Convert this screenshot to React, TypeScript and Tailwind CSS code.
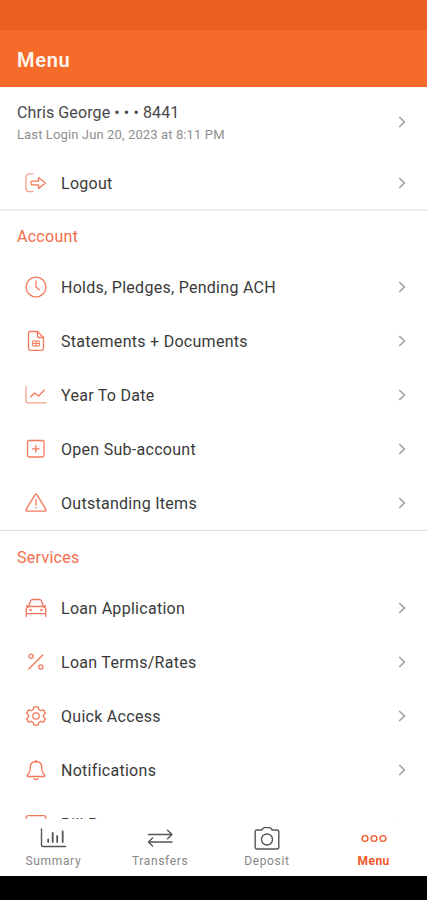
import type { ReactNode } from "react";

type Item = { label: string; icon: ReactNode };

function Icon({ children }: { children: ReactNode }) {
  return (
    <svg
      viewBox="0 0 22 22"
      className="h-[22px] w-[22px] shrink-0"
      fill="none"
      stroke="#f4795a"
      strokeWidth="1.3"
      strokeLinecap="round"
      strokeLinejoin="round"
    >
      {children}
    </svg>
  );
}

function Chevron() {
  return (
    <svg viewBox="0 0 8 12" className="h-3 w-2 shrink-0" fill="none" stroke="#a3a3a3" strokeWidth="1.7">
      <path d="M1.2 1 6.4 6 1.2 11" />
    </svg>
  );
}

const logoutIcon = (
  <Icon>
    <path d="M8 1.8H4.2Q1 1.8 1 5v11.5q0 3.200 3.200 3.200H8" strokeOpacity="0.7" />
    <path d="M7 9.200h6.500V5.600l7 5.400-7 5.400v-3.600H7q-1 0-1-1v-1.600q0-1 1-1Z" />
  </Icon>
);

const account: Item[] = [
  {
    label: "Holds, Pledges, Pending ACH",
    icon: (
      <Icon>
        <circle cx="11" cy="11" r="9.900" />
        <path d="M11 4.800V11l3.200 2.800" />
      </Icon>
    ),
  },
  {
    label: "Statements + Documents",
    icon: (
      <Icon>
        <path d="M12.500 1.500H5Q3.500 1.500 3.500 3v15.800q0 1.500 1.500 1.500h12q1.500 0 1.500-1.500V7.500Z" />
        <path d="M12.500 1.500v4.700q0 1.300 1.300 1.300h4.700" />
        <path d="M8 11h6.200v5H8ZM8 13.500h6.200M11 11v5" strokeWidth="1" />
      </Icon>
    ),
  },
  {
    label: "Year To Date",
    icon: (
      <Icon>
        <path d="M1 2.500v14.300q0 2 2 2h18" strokeOpacity="0.7" />
        <path d="m5.500 13 4-4 4 3 5.800-6" />
      </Icon>
    ),
  },
  {
    label: "Open Sub-account",
    icon: (
      <Icon>
        <rect x="2.500" y="2.500" width="16.500" height="16.500" rx="1.500" />
        <path d="M10.800 7.500v6.600M7.500 10.800h6.600" />
      </Icon>
    ),
  },
  {
    label: "Outstanding Items",
    icon: (
      <Icon>
        <path d="M9.800 3.100q1.200-2 2.400 0l8.400 13.800q1.100 2.300-1.400 2.300H2.800q-2.500 0-1.400-2.300Z" />
        <path d="M11 7.500v5.500M11 15.600v.3" />
      </Icon>
    ),
  },
];

const services: Item[] = [
  {
    label: "Loan Application",
    icon: (
      <Icon>
        <path d="M3.500 9.500 5.600 4q.6-1.500 2-1.500h6.800q1.400 0 2 1.500l2.100 5.500" />
        <path d="M3.500 9.500h15l2.200 2v5.200H1.300v-5.200ZM1.300 9h2.200M18.500 9h2.200M1.300 16.700v2.800M20.700 16.700v2.800M4.500 13h2M15.500 13h2" />
      </Icon>
    ),
  },
  {
    label: "Loan Terms/Rates",
    icon: (
      <Icon>
        <path d="M3.800 18 17.800 4" />
        <circle cx="6" cy="5.300" r="2.100" />
        <circle cx="15.800" cy="16" r="2.100" />
      </Icon>
    ),
  },
  {
    label: "Quick Access",
    icon: (
      <Icon>
        <path d="M9 1.800h4l.7 2.700 2 1.200 2.700-.9 2.100 3.500-2 1.700v2l2 1.700-2.100 3.500-2.700-.9-2 1.200-.7 2.700H9l-.7-2.700-2-1.200-2.700.9-2.100-3.500 2-1.700v-2l-2-1.700 2.100-3.500 2.700.9 2-1.200Z" />
        <circle cx="11" cy="11" r="3.200" />
      </Icon>
    ),
  },
  {
    label: "Notifications",
    icon: (
      <Icon>
        <path d="M11 1.300v1.200M11 2.500q-5.800 0-5.800 6.200 0 5-2.700 7-1 1.800.8 1.800h15.400q1.800 0 .8-1.800-2.700-2-2.700-7 0-6.200-5.800-6.200ZM9.200 19.800q1.800 1.600 3.600 0" />
      </Icon>
    ),
  },
  {
    label: "Bill Pay",
    icon: (
      <Icon>
        <rect x="1.200" y="2.600" width="19.600" height="16" rx="2" />
        <path d="M1.200 7h19.600" />
      </Icon>
    ),
  },
];

function Row({ label, icon }: Item) {
  return (
    <a className="flex h-[54px] shrink-0 items-center pr-[21px] pl-[25px]">
      {icon}
      <span className="ml-[14px] flex-1 pt-0.5 text-base tracking-[0.28px] text-[#3a3a3a]">{label}</span>
      <Chevron />
    </a>
  );
}

function Section({ title, items }: { title: string; items: Item[] }) {
  return (
    <section className="shrink-0">
      <h2 className="flex h-[49px] items-center pt-0.5 pl-[17px] text-base tracking-[0.28px] text-[#f46c4a]">{title}</h2>
      {items.map((item) => (
        <Row key={item.label} {...item} />
      ))}
    </section>
  );
}

function TabIcon({ children }: { children: ReactNode }) {
  return (
    <svg viewBox="0 0 28 26" className="h-[26px] w-7" fill="none" stroke="currentColor" strokeWidth="1.4" strokeLinecap="round" strokeLinejoin="round">
      {children}
    </svg>
  );
}

const tabs = [
  {
    label: "Summary",
    icon: (
      <TabIcon>
        <path d="M2.500 4v16q0 1.500 1.500 1.500h22.500" />
        <path d="M9.200 14.500v2.500M13.700 8v9M18.200 11v6M23.700 6.500V17" strokeWidth="1.800" />
      </TabIcon>
    ),
  },
  {
    label: "Transfers",
    icon: (
      <TabIcon>
        <path d="M2.500 9.500h23.500M21.500 5.200 26 9.500l-4.500 4.200M26 17H2.500M6.500 13l-4 4 4 4" />
      </TabIcon>
    ),
  },
  {
    label: "Deposit",
    icon: (
      <TabIcon>
        <path d="M4 5h4.800l1.400-1.900q.4-.5 1.200-.5h5.200q.8 0 1.200.5L19.200 5H24q1.800 0 1.800 1.800v15.400q0 1.800-1.800 1.800H4q-1.800 0-1.800-1.800V6.800Q2.200 5 4 5Z" />
        <circle cx="14" cy="14.500" r="5.500" />
      </TabIcon>
    ),
  },
  {
    label: "Menu",
    icon: (
      <TabIcon>
        <circle cx="5" cy="13.500" r="2.900" />
        <circle cx="14" cy="13.500" r="2.900" />
        <circle cx="23" cy="13.500" r="2.900" />
      </TabIcon>
    ),
  },
];

export default function App() {
  return (
    <div className="flex h-[900px] w-[427px] flex-col overflow-hidden bg-white font-[Roboto,sans-serif]">
      <div className="h-[30px] shrink-0 bg-[#ea6122]" />
      <header className="flex h-[57px] shrink-0 items-center border-b border-[#ee641f] bg-[#f56b2a] pt-1 pl-[17px]">
        <h1 className="text-xl font-semibold tracking-[0.7px] text-[#fff5ee]">Menu</h1>
      </header>

      <main className="flex min-h-0 flex-1 flex-col overflow-hidden">
        <div className="flex h-[69px] shrink-0 items-center pr-[21px] pl-[17px]">
          <div className="flex-1 pt-0.5">
            <div className="text-base leading-6 tracking-[0.1px] text-[#484848]">Chris George • • • 8441</div>
            <div className="text-[13px] leading-5 tracking-[0.12px] text-[#8f8f8f]">Last Login Jun 20, 2023 at 8:11 PM</div>
          </div>
          <Chevron />
        </div>
        <Row label="Logout" icon={logoutIcon} />
        <div className="-mt-px h-0.5 shrink-0 bg-[#efefef]" />
        <Section title="Account" items={account} />
        <div className="mb-px h-px shrink-0 bg-[#dcdcdc]" />
        <Section title="Services" items={services} />
      </main>

      <nav className="grid h-[57px] shrink-0 grid-cols-4 bg-white pt-1.5">
        {tabs.map((tab) => (
          <a
            key={tab.label}
            className={
              tab.label === "Menu"
                ? "flex flex-col items-center font-bold text-[#f0592b]"
                : "flex flex-col items-center text-[#555]"
            }
          >
            {tab.icon}
            <span
              className={
                tab.label === "Menu"
                  ? "mt-0.5 text-xs tracking-[0.5px]"
                  : "mt-0.5 text-xs tracking-[0.65px] text-[#868686]"
              }
            >
              {tab.label}
            </span>
          </a>
        ))}
      </nav>
      <div className="h-6 shrink-0 bg-black" />
    </div>
  );
}
